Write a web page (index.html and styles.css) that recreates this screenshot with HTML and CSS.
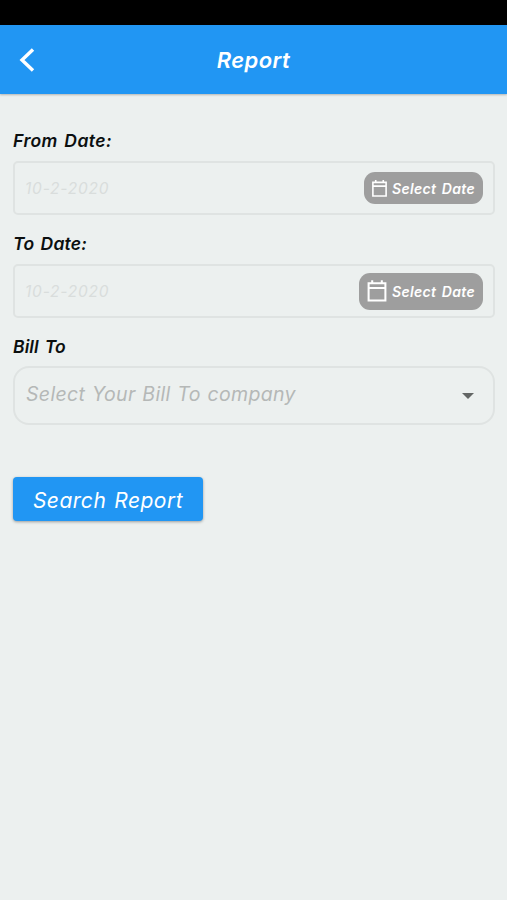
FILE: index.html
```html
<!DOCTYPE html>
<html lang="en">
<head>
  <meta charset="UTF-8">
  <meta name="viewport" content="width=device-width, initial-scale=1.0">
  <title>Report</title>
  <link rel="stylesheet" href="styles.css">
</head>
<body>

<div class="status-bar"></div>

<header class="app-bar">
  <a class="back">
    <svg viewBox="0 0 18 26">
      <path d="M15 2.5L4 13L15 23.5"/>
    </svg>
  </a>
  <h1><span>Report</span></h1>
</header>

<main class="form">
  <label class="from-label"><span>From Date:</span></label>
  <div class="date-field">
    <span class="date">10-2-2020</span>
    <button class="pick-btn">
      <svg viewBox="0 0 18 20">
        <path d="M2 3.5H16V18H2ZM2 7.5H16M5 1V4M13 1V4"/>
      </svg>
      <span>Select Date</span>
    </button>
  </div>

  <label class="to-label"><span>To Date:</span></label>
  <div class="date-field">
    <span class="date">10-2-2020</span>
    <button class="pick-btn pick-btn-large">
      <svg viewBox="0 0 18 20">
        <path d="M2 3.5H16V18H2ZM2 7.5H16M5 1V4M13 1V4"/>
      </svg>
      <span>Select Date</span>
    </button>
  </div>

  <label class="bill-label"><span>Bill To</span></label>
  <div class="select-field">
    <span class="placeholder">Select Your Bill To company</span>
    <svg class="caret" viewBox="0 0 12 6">
      <path d="M0 0H12L6 6Z"/>
    </svg>
  </div>

  <button class="search-btn"><span>Search Report</span></button>
</main>

</body>
</html>
```
FILE: styles.css
```css
* {
  box-sizing: border-box;
}

body {
  margin: 0;
  min-height: 100vh;
  background: #ecf0ef;
  color: #0b0f0f;
  font-family: Inter, "Liberation Sans", sans-serif;
  font-style: italic;
  font-feature-settings: "cv11";
}

button {
  border: none;
  color: #fff;
  font: inherit;
  font-feature-settings: inherit;
  cursor: pointer;
}

.status-bar {
  height: 25px;
  background: #000;
}

.app-bar {
  display: grid;
  grid-template-columns: 60px 1fr 60px;
  align-items: center;
  height: 69px;
  background: #2196f3;
  color: #fff;
  box-shadow: 0 1px 2px rgba(0, 0, 0, 0.25);
}

.back {
  display: flex;
  padding-left: 18px;
}

.back svg {
  width: 18px;
  height: 26px;
  fill: none;
  stroke: #fff;
  stroke-width: 3.4;
}

h1 {
  margin: 1px 0 0;
  text-align: center;
  font-size: 22px;
  line-height: 28px;
  font-weight: 600;
  letter-spacing: 0.4px;
}

.form {
  display: flex;
  flex-direction: column;
  padding: 34px 12px 0 13px;
}

label {
  height: 33px;
  line-height: 26px;
  font-size: 17.5px;
  font-weight: 600;
  letter-spacing: 0.25px;
  word-spacing: 1.5px;
  white-space: nowrap;
}

.from-label {
  letter-spacing: 0.5px;
  word-spacing: 1.5px;
}

.bill-label {
  height: 32px;
  letter-spacing: 0.1px;
}

.date-field {
  display: flex;
  align-items: center;
  justify-content: space-between;
  height: 54px;
  margin-bottom: 16px;
  padding: 0 10px;
  border: 2px solid #dfe3e2;
  border-radius: 5px;
}

.date {
  color: #d9dddc;
  font-size: 15.5px;
  letter-spacing: 0.8px;
}

.pick-btn {
  display: flex;
  align-items: center;
  gap: 4px;
  height: 32px;
  margin-right: 0.5px;
  padding: 0 7.5px;
  border-radius: 11px;
  background: #9e9e9e;
  font-size: 14px;
  font-weight: 600;
  letter-spacing: 0.35px;
  word-spacing: 1.5px;
  white-space: nowrap;
}

.pick-btn svg {
  width: 17px;
  height: 19px;
  fill: none;
  stroke: #fff;
  stroke-width: 1.7;
}

.pick-btn-large {
  height: 37px;
}

.pick-btn-large svg {
  width: 22px;
  height: 24px;
}

.select-field {
  display: flex;
  align-items: center;
  justify-content: space-between;
  height: 59px;
  padding: 0 19px 3px 11px;
  border: 2px solid #dfe3e2;
  border-radius: 16px;
}

.placeholder {
  color: #b5b8b7;
  font-size: 19.5px;
  letter-spacing: 0.35px;
  word-spacing: 0.8px;
}

.caret {
  width: 12px;
  height: 6px;
  margin-top: 3px;
  fill: #636665;
}

.search-btn {
  align-self: flex-start;
  width: 190px;
  height: 44px;
  margin-top: 52px;
  padding: 2px 0 0;
  border-radius: 4px;
  background: #2196f3;
  box-shadow: 0 1px 3px rgba(0, 0, 0, 0.35);
  font-size: 21px;
  letter-spacing: 0.5px;
  word-spacing: 1.5px;
}
```
